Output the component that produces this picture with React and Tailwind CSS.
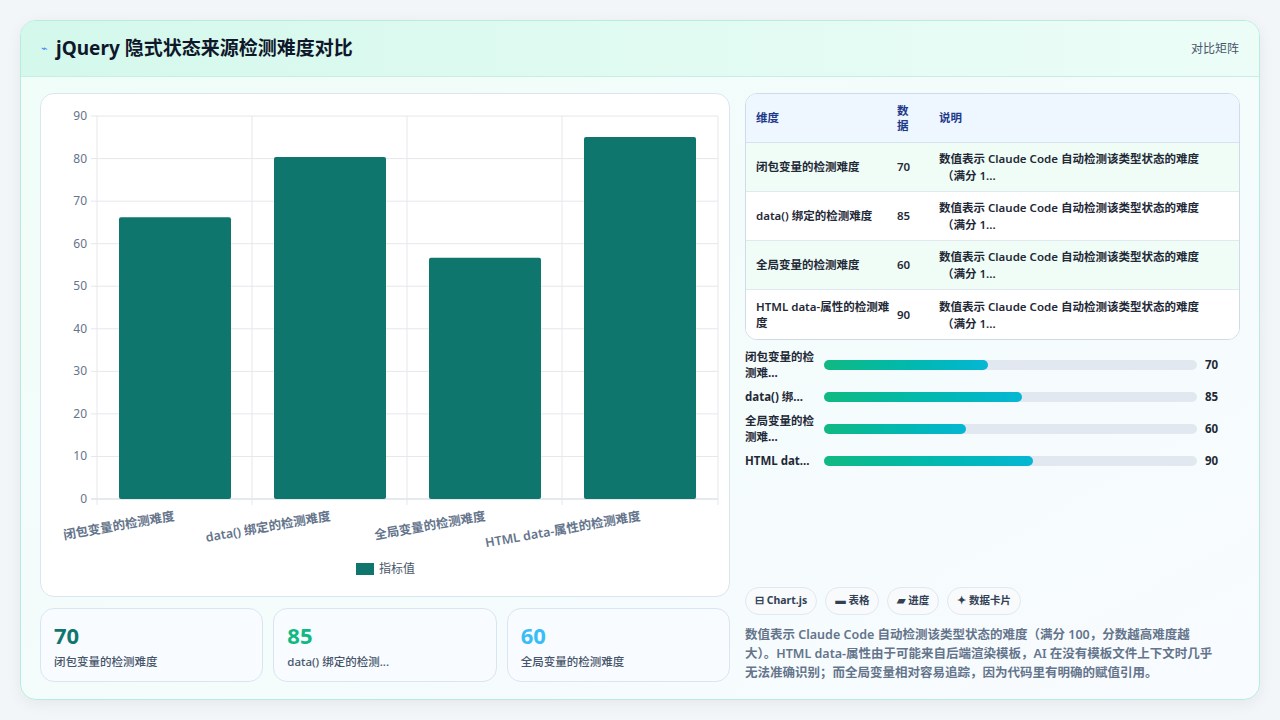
export default function App() {
  const font = { fontFamily: '"Noto Sans", "Noto Sans CJK SC", sans-serif' };
  const bars = [
    { l: "闭包变量的检测难度", v: 66.2 },
    { l: "data() 绑定的检测难度", v: 80.4 },
    { l: "全局变量的检测难度", v: 56.7 },
    { l: "HTML data-属性的检测难度", v: 85.1 },
  ];
  const y0 = 405, k = 4.255;
  const rows = [
    ["闭包变量的检测难度", "70"],
    ["data() 绑定的检测难度", "85"],
    ["全局变量的检测难度", "60"],
    ["HTML data-属性的检测难度", "90"],
  ];
  const prog = [
    ["闭包变量的检", "测难...", 70, 44],
    ["data() 绑...", null, 85, 53],
    ["全局变量的检", "测难...", 60, 38],
    ["HTML dat...", null, 90, 56],
  ];
  return (
    <div className="w-[1280px] h-[720px] bg-[#f3f6f9] p-[20px]" style={font}>
      <div className="h-[680px] rounded-[16px] border border-[#b9ecdf] bg-gradient-to-br from-[#f0fdf8] to-[#f8fbff] overflow-hidden flex flex-col shadow-[0_4px_16px_rgba(0,0,0,0.06)]">
        <div className="h-[56px] shrink-0 flex items-center justify-between px-[20px] bg-gradient-to-r from-[#d4f8ec] to-[#ecfdf7] border-b border-[#c4efe2]">
          <div className="flex items-center gap-[8px]">
            <span className="text-[11px] text-[#3b82f6]">⌁</span>
            <span className="text-[19px] font-bold text-[#0f172a]">jQuery 隐式状态来源检测难度对比</span>
          </div>
          <span className="text-[12px] text-[#475569]">对比矩阵</span>
        </div>
        <div className="flex-1 flex gap-[15px] p-[19px] pt-[16px]">
          <div className="w-[690px] flex flex-col gap-[11px]">
            <div className="h-[504px] rounded-[14px] border border-[#dbe5ef] bg-white">
              <svg width="690" height="504">
                {[0,1,2,3,4,5,6,7,8,9].map(i => (
                  <g key={i}>
                    <line x1="50" x2="677" y1={y0 - i*42.55} y2={y0 - i*42.55} stroke={i===0 ? "#cbd5e1" : "#e5e7eb"} />
                    <text x="46" y={y0 - i*42.55 + 4} textAnchor="end" fontSize="12" fill="#64748b">{i*10}</text>
                  </g>
                ))}
                {[56,211,366,521,677].map(x => <line key={x} x1={x} x2={x} y1="22" y2={y0+6} stroke="#e5e7eb" />)}
                {bars.map((b, i) => (
                  <rect key={i} x={78 + i*155} y={y0 - b.v*k} width="112" height={b.v*k} rx="2" fill="#0f766e" />
                ))}
                {bars.map((b, i) => (
                  <text key={i} transform={`translate(${[134,290,445,600][i]},${[426,426,426,426][i]}) rotate(-10)`} textAnchor="end" fontSize="12.5" fontWeight="600" fill="#64748b" dx={[0,0,0,0][i]}>{b.l}</text>
                ))}
                <rect x="315" y="469" width="18" height="12" fill="#0f766e" />
                <text x="338" y="479" fontSize="12" fill="#475569">指标值</text>
              </svg>
            </div>
            <div className="grid grid-cols-3 gap-[10px]">
              {[["70","#0f766e","闭包变量的检测难度"],["85","#10b981","data() 绑定的检测..."],["60","#38bdf8","全局变量的检测难度"]].map(([v,c,l]) => (
                <div key={v} className="h-[74px] rounded-[14px] border border-[#dbe5ef] bg-[#f8fbff] px-[13px] pt-[12px]">
                  <div className="text-[22px] font-bold leading-[28px]" style={{color:c}}>{v}</div>
                  <div className="text-[11.5px] text-[#475569] mt-[4px] font-medium">{l}</div>
                </div>
              ))}
            </div>
          </div>
          <div className="flex-1 flex flex-col">
            <div className="rounded-[12px] border border-[#cfdbe8] overflow-hidden bg-white">
              <div className="h-[49px] bg-[#eef6ff] flex items-center text-[11.5px] font-bold text-[#1e3a8a] border-b border-[#d6e2ee]">
                <div className="w-[151px] pl-[10px]">维度</div>
                <div className="w-[42px] leading-[15px]">数<br/>据</div>
                <div>说明</div>
              </div>
              {rows.map(([a,b], i) => (
                <div key={i} className={`h-[49px] flex items-center text-[11.5px] font-semibold text-[#1f2937] ${i<3 ? "border-b border-[#e2e8f0]" : ""} ${i%2===0 ? "bg-[#f0fdf6]" : "bg-white"}`}>
                  <div className="w-[151px] pl-[10px] pr-[6px] leading-[16px]">{a}</div>
                  <div className="w-[42px]">{b}</div>
                  <div className="flex-1 leading-[17px] pr-[10px]">数值表示 Claude Code 自动检测该类型状态的难度<br/>&nbsp;（满分 1...</div>
                </div>
              ))}
            </div>
            <div className="mt-[12px] flex flex-col gap-[6px]">
              {prog.map(([a,b,v,w], i) => (
                <div key={i} className="h-[26px] flex items-center">
                  <div className="w-[79px] text-[11.5px] font-bold text-[#1f2937] leading-[16px]">{a}{b && <><br/>{b}</>}</div>
                  <div className="w-[373px] h-[10px] rounded-full bg-[#e2e8f0]">
                    <div className="h-full rounded-full bg-gradient-to-r from-[#10b981] to-[#06b6d4]" style={{width: w+"%"}} />
                  </div>
                  <div className="ml-[8px] text-[11.5px] font-bold text-[#1f2937]">{v}</div>
                </div>
              ))}
            </div>
            <div className="flex-1" />
            <div className="flex gap-[8px]">
              {["⊟ Chart.js","▬ 表格","▰ 进度","✦ 数据卡片"].map(t => (
                <div key={t} className="h-[28px] px-[9px] flex items-center rounded-full border border-[#e2e8f0] bg-[#f8fafc] text-[10.5px] font-bold text-[#334155]">{t}</div>
              ))}
            </div>
            <div className="mt-[10px] text-[12.5px] font-semibold text-[#64748b] leading-[19px] pr-[20px]">
              数值表示 Claude Code 自动检测该类型状态的难度（满分 100，分数越高难度越大）。HTML data-属性由于可能来自后端渲染模板，AI 在没有模板文件上下文时几乎无法准确识别；而全局变量相对容易追踪，因为代码里有明确的赋值引用。
            </div>
          </div>
        </div>
      </div>
    </div>
  );
}
